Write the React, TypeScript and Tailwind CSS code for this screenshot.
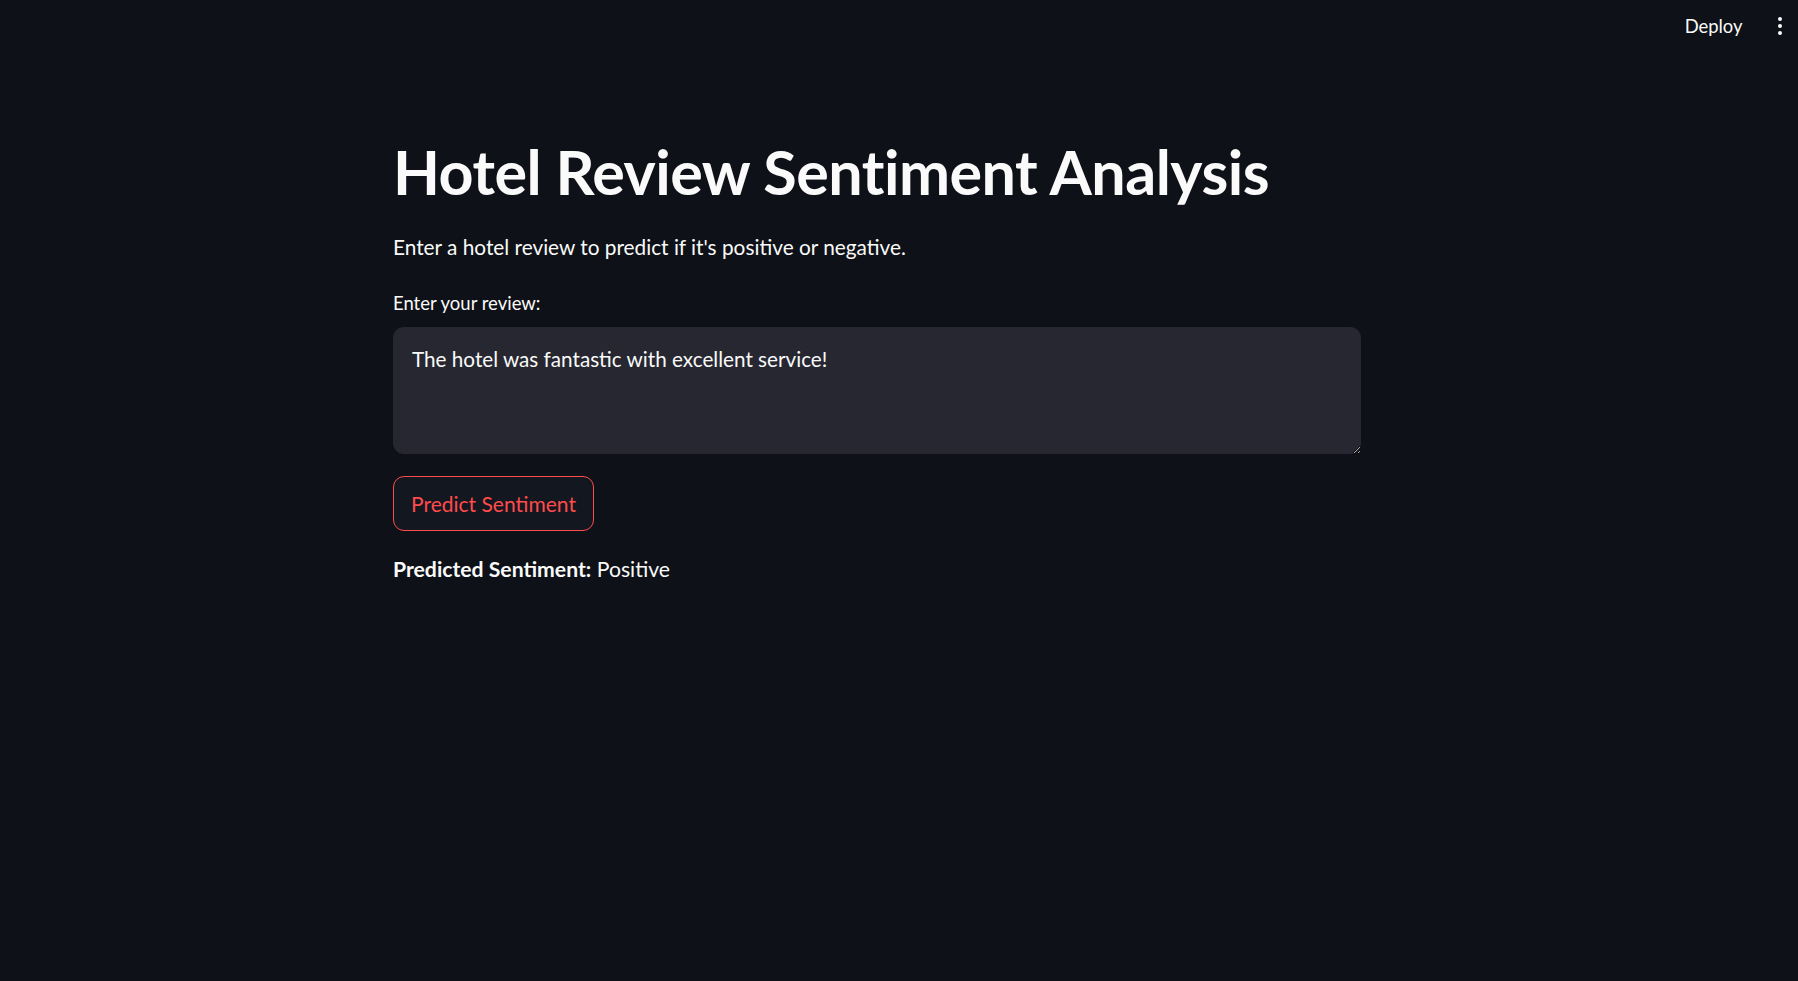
import { useState } from "react";

const FONT = "font-['Lato','Noto_Sans',sans-serif]";

function Header() {
  return (
    <header className="flex h-[52px] items-center justify-end gap-[33px] pr-[14px]">
      <button className="text-[18.4px] leading-none text-[#fafafa]">Deploy</button>
      <div className="flex flex-col items-center gap-[2.5px] px-[2px]" aria-label="menu">
        <span className="h-[4.5px] w-[4.5px] rounded-full bg-[#fafafa]" />
        <span className="h-[4.5px] w-[4.5px] rounded-full bg-[#fafafa]" />
        <span className="h-[4.5px] w-[4.5px] rounded-full bg-[#fafafa]" />
      </div>
    </header>
  );
}

export default function App() {
  const [review, setReview] = useState("The hotel was fantastic with excellent service!");

  return (
    <div className={`min-h-[981px] bg-[#0e1117] text-[#fafafa] ${FONT}`}>
      <Header />
      <main className="ml-[393px] flex w-[968px] flex-col pt-[85px]">
        <h1 className="text-[61px] font-bold leading-[70px] tracking-[-0.5px]">
          Hotel Review Sentiment Analysis
        </h1>
        <p className="mt-[25px] text-[20.8px] leading-[30px]">
          Enter a hotel review to predict if it's positive or negative.
        </p>
        <label className="mt-[29px] text-[18.5px] leading-[24px]">Enter your review:</label>
        <textarea
          value={review}
          onChange={(e) => setReview(e.target.value)}
          className="mt-[12px] h-[127px] w-full rounded-[11px] bg-[#262730] px-[19px] pb-[16px] pt-[17px] text-[20.7px] leading-[30px] text-[#fafafa] outline-none"
        />
        <div className="mt-[22px]">
          <button className="h-[55px] w-[201px] rounded-[11px] border border-[#ff4b4b] bg-[#131720] text-[21px] text-[#ff4b4b]">
            Predict Sentiment
          </button>
        </div>
        <p className="mt-[23px] text-[21.2px] leading-[30px]">
          <span className="font-bold">Predicted Sentiment:</span> Positive
        </p>
      </main>
    </div>
  );
}
